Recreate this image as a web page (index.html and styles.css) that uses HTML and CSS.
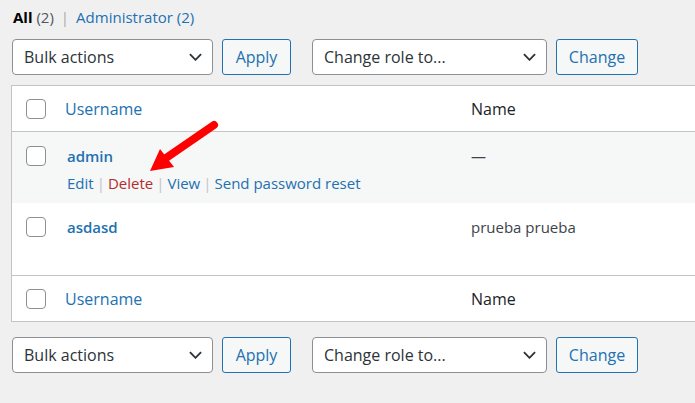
FILE: index.html
```html
<!DOCTYPE html>
<html>
<head>
<meta charset="utf-8">
<link rel="stylesheet" href="styles.css">
</head>
<body>
<div class="wrap">
  <ul class="views">
    <li><span class="current">All</span> <span class="count">(2)</span></li>
    <li class="sep">|</li>
    <li><a class="link">Administrator <span class="count-link">(2)</span></a></li>
  </ul>
  <div class="tablenav top">
    <div class="select bulk"><span>Bulk actions</span><svg class="chev" viewBox="0 0 14 8"><path d="M1 1 L7 7 L13 1" fill="none" stroke="#2c3338" stroke-width="2"/></svg></div>
    <button class="btn apply">Apply</button>
    <div class="select role"><span>Change role to...</span><svg class="chev" viewBox="0 0 14 8"><path d="M1 1 L7 7 L13 1" fill="none" stroke="#2c3338" stroke-width="2"/></svg></div>
    <button class="btn change">Change</button>
  </div>
  <div class="table">
    <div class="row head">
      <div class="cb"><span class="box"></span></div>
      <div class="col-user"><a class="link">Username</a></div>
      <div class="col-name">Name</div>
    </div>
    <div class="row user alt">
      <div class="cb"><span class="box"></span></div>
      <div class="col-user">
        <strong class="uname">admin</strong>
        <div class="actions">
          <a class="link">Edit</a><span class="bar">|</span><a class="del">Delete</a><span class="bar">|</span><a class="link">View</a><span class="bar">|</span><a class="link">Send password reset</a>
        </div>
      </div>
      <div class="col-name">—</div>
    </div>
    <div class="row user">
      <div class="cb"><span class="box"></span></div>
      <div class="col-user"><strong class="uname">asdasd</strong></div>
      <div class="col-name">prueba prueba</div>
    </div>
    <div class="row head foot">
      <div class="cb"><span class="box"></span></div>
      <div class="col-user"><a class="link">Username</a></div>
      <div class="col-name">Name</div>
    </div>
    <svg class="arrow" viewBox="0 0 80 60" width="80" height="60">
      <line x1="66" y1="7" x2="18" y2="40" stroke="#f00" stroke-width="8" stroke-linecap="round"/>
      <polygon points="2,53 12,31 26,49" fill="#f00"/>
    </svg>
  </div>
  <div class="tablenav bottom">
    <div class="select bulk"><span>Bulk actions</span><svg class="chev" viewBox="0 0 14 8"><path d="M1 1 L7 7 L13 1" fill="none" stroke="#2c3338" stroke-width="2"/></svg></div>
    <button class="btn apply">Apply</button>
    <div class="select role"><span>Change role to...</span><svg class="chev" viewBox="0 0 14 8"><path d="M1 1 L7 7 L13 1" fill="none" stroke="#2c3338" stroke-width="2"/></svg></div>
    <button class="btn change">Change</button>
  </div>
</div>
</body>
</html>
```
FILE: styles.css
```css
* { box-sizing: border-box; }
html, body { margin: 0; padding: 0; }
body {
  background: #f0f0f1;
  font-family: "Open Sans", "Noto Sans", sans-serif;
  color: #3c434a;
  width: 695px;
  height: 403px;
  overflow: hidden;
}
.wrap { padding: 0 0 0 12px; }
.views {
  list-style: none;
  margin: 0;
  padding: 6px 0 0 1px;
  display: flex;
  gap: 7px;
  font-size: 15px;
  line-height: 22px;
  height: 39px;
}
.current { font-weight: 700; color: #000; }
.count { color: #50575e; }
.sep { color: #a7aaad; }
.link { color: #2271b1; text-decoration: none; }
.tablenav {
  display: flex;
  height: 36px;
}
.tablenav.bottom { margin-top: 15px; }
.select {
  height: 36px;
  background: #fff;
  border: 1px solid #8c8f94;
  border-radius: 4px;
  display: flex;
  align-items: center;
  justify-content: space-between;
  padding: 0 10px 0 11px;
  font-size: 16px;
  color: #2c3338;
}
.bulk { width: 201px; }
.role { width: 235px; }
.chev { width: 13px; height: 8px; }
.btn {
  height: 36px;
  margin-left: 9px;
  border: 1px solid #2271b1;
  border-radius: 3px;
  background: #f6f7f7;
  color: #2271b1;
  font-family: inherit;
  font-size: 16px;
  padding: 0;
}
.apply { width: 69px; margin-right: 21px; }
.change { width: 82px; }
.table {
  position: relative;
  margin: 10px 0 0 -1px;
  width: 700px;
  background: #fff;
  border: 1px solid #c3c4c7;
  border-right: none;
}
.row {
  display: flex;
  align-items: flex-start;
}
.row.head { height: 46px; align-items: center; border-bottom: 1px solid #c3c4c7; }
.row.foot { border-bottom: none; border-top: 1px solid #c3c4c7; height: 46px; }
.row.user { height: 72px; padding-top: 14px; }
.row.alt { background: #f6f7f7; height: 71px; }
.cb { width: 53px; padding-left: 14px; display: flex; }
.box {
  width: 20px;
  height: 20px;
  border: 1px solid #8c8f94;
  border-radius: 4px;
  background: #fff;
}
.col-user { width: 406px; font-size: 16px; }
.row.head .col-user { padding-left: 0; }
.row.user .col-user { padding-left: 2px; }
.col-name { font-size: 16px; color: #1d2327; }
.row.user .col-name { font-size: 15px; color: #3c434a; }
.uname { color: #2271b1; font-weight: 600; font-size: 15px; line-height: 20px; display: block; }
.actions { font-size: 15px; margin-top: 7px; }
.bar { color: #c3c4c7; margin: 0 3px; }
.del { color: #b32d2e; }
.arrow { position: absolute; left: 136px; top: 32px; }
```
